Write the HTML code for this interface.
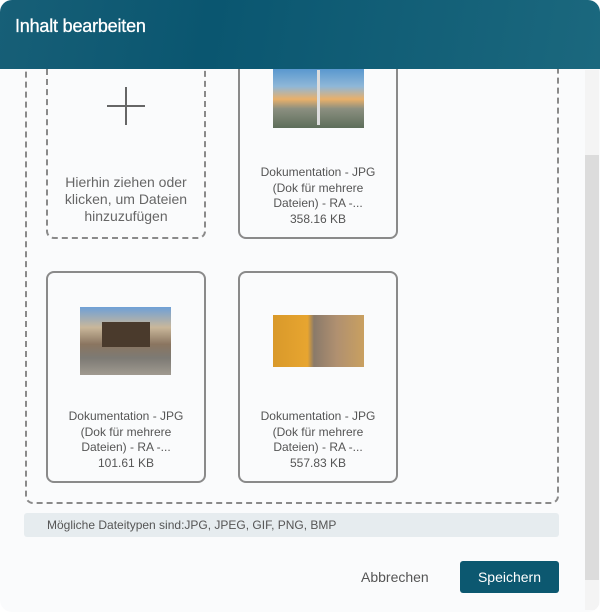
<!DOCTYPE html>
<html><head><style>
*{box-sizing:border-box;margin:0;padding:0}
body{width:600px;height:612px;background:#fff;font-family:"Liberation Sans",sans-serif;position:relative;overflow:hidden}
.dlg{position:absolute;left:0;top:0;width:600px;height:612px;background:#fafbfc;border-radius:12px;overflow:hidden}
.hdr{position:absolute;left:0;top:0;width:600px;height:69px;background:linear-gradient(100deg,#175f77 0%,#0a5670 35%,#1b687e 100%);z-index:5}
.hdr h1{position:absolute;left:15px;top:16px;color:#fff;font-size:18px;font-weight:normal;letter-spacing:-0.2px;-webkit-text-stroke:0.3px #fff}
.drop{position:absolute;left:25px;top:30px;width:534px;height:474px;border:2px dashed #8a8a8a;border-radius:8px}
.tile{position:absolute;width:160px;height:212px;border:2px solid #8a8a8a;border-radius:8px;background:#fafbfc;text-align:center;color:#555;font-size:12px;line-height:15.5px}
.tile .t{position:absolute;left:0;right:0;top:136px}
.img{position:absolute}
.sb{position:absolute;left:585px;top:70px;width:14px;height:540px;background:#f4f4f4}
.th{position:absolute;left:585px;top:155px;width:14px;height:425px;background:#dcdcdc}
</style></head><body>
<div class="dlg">
<div class="hdr"><h1>Inhalt bearbeiten</h1></div>
<div class="drop"></div>
<div class="tile" style="left:46px;top:27px;border:2px dashed #8a8a8a;color:#666;font-size:14px;line-height:17px">
<div style="position:absolute;left:77px;top:58px;width:2px;height:38px;background:#666"></div>
<div style="position:absolute;left:59px;top:76px;width:38px;height:2px;background:#666"></div>
<div style="position:absolute;left:0;right:0;top:145px">Hierhin ziehen oder<br>klicken, um Dateien<br>hinzuzufügen</div>
</div>
<div class="tile" style="left:238px;top:27px">
<div class="img" style="left:33px;top:35px;width:91px;height:64px;background:linear-gradient(180deg,#4a8fcc 0%,#8fb7d8 35%,#e9b06a 55%,#8b8f80 70%,#5d6e5a 100%)"><div style="position:absolute;left:44px;top:6px;width:3px;height:55px;background:#ddd"></div></div>
<div class="t">Dokumentation - JPG<br>(Dok für mehrere<br>Dateien) - RA -...<br>358.16 KB</div>
</div>
<div class="tile" style="left:46px;top:271px">
<div class="img" style="left:32px;top:34px;width:91px;height:68px;background:linear-gradient(180deg,#6fa0d6 0%,#c9b79a 30%,#8a7560 55%,#7d7a74 75%,#a09a90 100%)"><div style="position:absolute;left:22px;top:15px;width:48px;height:25px;background:#4a3a2c"></div></div>
<div class="t">Dokumentation - JPG<br>(Dok für mehrere<br>Dateien) - RA -...<br>101.61 KB</div>
</div>
<div class="tile" style="left:238px;top:271px">
<div class="img" style="left:33px;top:42px;width:91px;height:52px;background:linear-gradient(90deg,#d9992a 0%,#e7a530 38%,#8a7a6a 45%,#b09070 70%,#c9a060 100%)"></div>
<div class="t">Dokumentation - JPG<br>(Dok für mehrere<br>Dateien) - RA -...<br>557.83 KB</div>
</div>
<div style="position:absolute;left:24px;top:513px;width:535px;height:24px;background:#e6ecef;border-radius:3px;font-size:12px;color:#555;line-height:24px;padding-left:23px">Mögliche Dateitypen sind:JPG, JPEG, GIF, PNG, BMP</div>
<div style="position:absolute;left:361px;top:569px;font-size:14px;color:#555">Abbrechen</div>
<div style="position:absolute;left:460px;top:561px;width:99px;height:32px;background:#0c5870;border-radius:3px;color:#fff;font-size:14px;text-align:center;line-height:32px">Speichern</div>
<div class="sb"></div><div class="th"></div>
</div>
</body></html>
